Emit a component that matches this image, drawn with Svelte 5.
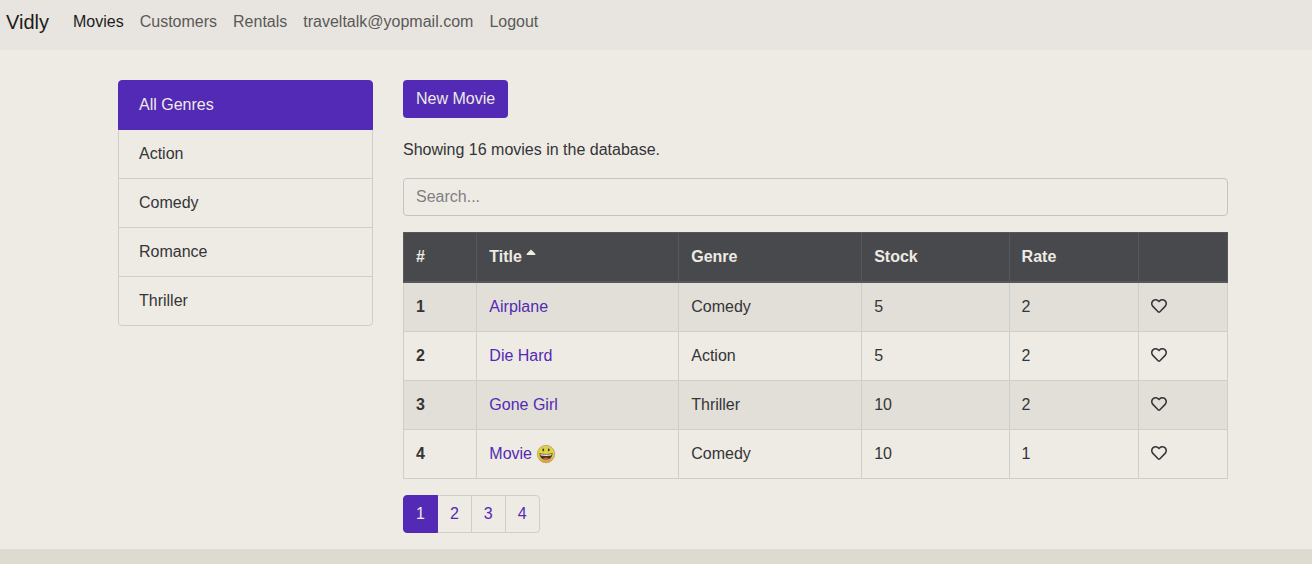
<script>
  const links = ['Customers', 'Rentals', 'traveltalk@yopmail.com', 'Logout'];
  const genres = ['All Genres', 'Action', 'Comedy', 'Romance', 'Thriller'];
  const movies = [
    { id: 1, title: 'Airplane', genre: 'Comedy', stock: 5, rate: 2 },
    { id: 2, title: 'Die Hard', genre: 'Action', stock: 5, rate: 2 },
    { id: 3, title: 'Gone Girl', genre: 'Thriller', stock: 10, rate: 2 },
    { id: 4, title: 'Movie', smile: true, genre: 'Comedy', stock: 10, rate: 1 }
  ];
  const pages = [1, 2, 3, 4];
  let genre = $state('All Genres');
  let page = $state(1);
  let query = $state('');
</script>

<div class="app">
  <nav class="navbar">
    <a class="brand" href="#home">Vidly</a>
    <a class="nav-link active" href="#movies">Movies</a>
    {#each links as link}
      <a class="nav-link" href="#{link}">{link}</a>
    {/each}
  </nav>

  <main>
    <ul class="genres">
      {#each genres as g}
        <li><button class:active={g === genre} onclick={() => (genre = g)}>{g}</button></li>
      {/each}
    </ul>

    <section>
      <a class="new" href="#new">New Movie</a>
      <p>Showing 16 movies in the database.</p>
      <input class="search" type="text" placeholder="Search..." aria-label="Search" bind:value={query} />

      <table>
        <colgroup>
          <col class="c-id" /><col class="c-title" /><col class="c-genre" />
          <col class="c-stock" /><col class="c-rate" /><col />
        </colgroup>
        <thead>
          <tr>
            <th>#</th>
            <th>
              Title
              <svg class="caret" viewBox="0 0 320 512" aria-hidden="true">
                <path d="M279 224H41c-21.400 0-32.100-25.900-17-41L143 64c9.400-9.400 24.600-9.400 33.900 0l119 119c15.200 15.100 4.500 41-16.900 41z" />
              </svg>
            </th>
            <th>Genre</th>
            <th>Stock</th>
            <th>Rate</th>
            <th></th>
          </tr>
        </thead>
        <tbody>
          {#each movies as m}
            <tr>
              <th>{m.id}</th>
              <td>
                <a href="#movie-{m.id}">{m.title}
                  {#if m.smile}
                    <svg class="smile" viewBox="0 0 20 20" aria-hidden="true">
                      <defs>
                        <linearGradient id="face" x1="0" y1="0" x2="0" y2="1">
                          <stop offset="0" stop-color="#d9ce55" />
                          <stop offset="0.55" stop-color="#e2d83f" />
                          <stop offset="1" stop-color="#d99b3c" />
                        </linearGradient>
                      </defs>
                      <circle cx="10" cy="10" r="8.700" fill="url(#face)" stroke="#b98f6a" stroke-width="0.700" />
                      <ellipse cx="7.300" cy="6" rx="0.900" ry="1.400" fill="#4b3c20" />
                      <ellipse cx="12.700" cy="6" rx="0.900" ry="1.400" fill="#4b3c20" />
                      <path d="M3.300 9.300Q10 10.600 16.700 9.300Q16 15.600 10 15.600Q4 15.600 3.300 9.300Z" fill="#4a3020" />
                      <path d="M4.200 9.900Q10 11 15.800 9.900L15.200 11.600Q10 12.400 4.800 11.600Z" fill="#f0eee6" />
                      <path d="M7 14.400Q10 12.700 13 14.400Q10 15.800 7 14.400Z" fill="#d05a45" />
                    </svg>
                  {/if}
                </a>
              </td>
              <td>{m.genre}</td>
              <td>{m.stock}</td>
              <td>{m.rate}</td>
              <td>
                <button class="like" aria-label="Like {m.title}">
                  <svg viewBox="0 0 512 512" aria-hidden="true">
                    <path d="M458.400 64.300C400.600 15.700 311.300 23 256 79.300 200.700 23 111.400 15.600 53.600 64.300-21.600 127.600-10.600 230.800 43 285.500l175.400 178.700c10 10.200 23.400 15.900 37.600 15.900 14.300 0 27.600-5.600 37.600-15.800L469 285.600c53.500-54.700 64.700-157.900-10.600-221.300zm-23.600 187.500L259.400 430.500c-2.400 2.400-4.400 2.400-6.800 0L77.200 251.800c-36.500-37.200-43.900-107.600 7.300-150.700 38.900-32.700 98.900-27.800 136.500 10.500l35 35.700 35-35.700c37.800-38.500 97.800-43.200 136.500-10.600 51.100 43.100 43.500 113.900 7.300 150.800z" />
                  </svg>
                </button>
              </td>
            </tr>
          {/each}
        </tbody>
      </table>

      <ul class="pages">
        {#each pages as p}
          <li><button class:active={p === page} onclick={() => (page = p)}>{p}</button></li>
        {/each}
      </ul>
    </section>
  </main>
</div>

<style>
  :global(body) {
    background: #dddacf;
  }
  .app,
  .app :global(*) {
    box-sizing: border-box;
  }
  .app {
    background: #eeebe4;
    color: #343537;
    font: 16px/24px "Liberation Sans", Arial, sans-serif;
  }
  a {
    color: #532ab5;
    text-decoration: none;
  }
  button {
    font: inherit;
    background: none;
    cursor: pointer;
  }
  ul {
    list-style: none;
    margin: 0;
    padding: 0;
  }
  .navbar {
    display: flex;
    align-items: center;
    padding: 2px 6px 8px;
    background: #e8e5e0;
  }
  .brand {
    margin-right: 16px;
    font-size: 20px;
    line-height: 30px;
    color: #1c1c1b;
  }
  .nav-link {
    padding: 8px;
    color: #5a5957;
  }
  .nav-link.active {
    color: #1c1c1b;
  }
  main {
    display: grid;
    grid-template-columns: 255fr 825fr;
    gap: 30px;
    align-items: start;
    padding: 30px 84px 16px 118px;
  }
  .genres li + li {
    margin-top: -1px;
  }
  .genres button {
    display: block;
    width: 100%;
    padding: 12px 20px;
    border: 1px solid #d0cecb;
    color: #343537;
    text-align: left;
  }
  .genres li:first-child button {
    border-radius: 4px 4px 0 0;
  }
  .genres li:last-child button {
    border-radius: 0 0 4px 4px;
  }
  .genres button.active {
    position: relative;
    background: #532ab5;
    border-color: #532ab5;
    color: #eeebe4;
  }
  .new {
    display: inline-block;
    padding: 7px 13px;
    border-radius: 4px;
    background: #532ab5;
    color: #eeebe4;
    vertical-align: top;
  }
  p {
    margin: 20px 0 16px;
  }
  .search {
    display: block;
    width: 100%;
    height: 38px;
    padding: 6px 12px;
    border: 1px solid #c3c4c6;
    border-radius: 4px;
    background: transparent;
    color: #343537;
    font: inherit;
  }
  .search::placeholder {
    color: #7f8082;
    opacity: 1;
  }
  table {
    width: 100%;
    margin: 16px 0;
    table-layout: fixed;
    border-collapse: collapse;
  }
  .c-id { width: 8.9%; }
  .c-title { width: 24.5%; }
  .c-genre { width: 22.2%; }
  .c-stock { width: 17.9%; }
  .c-rate { width: 15.7%; }
  th,
  td {
    padding: 12px;
    border: 1px solid #d0cecb;
    text-align: left;
    vertical-align: top;
  }
  thead th {
    background: #48494c;
    border-color: #57585b;
    border-bottom-width: 2px;
    color: #eeebe4;
  }
  tbody tr:nth-child(odd) {
    background: #e2dfd8;
  }
  .caret {
    width: 10px;
    height: 16px;
    vertical-align: -2px;
    fill: currentColor;
  }
  .smile {
    width: 20px;
    height: 20px;
    vertical-align: -5px;
  }
  .like {
    display: flex;
    align-items: center;
    height: 24px;
    padding: 0 0 2px;
    border: 0;
    color: #343537;
  }
  .like svg {
    width: 16px;
    height: 16px;
    fill: currentColor;
  }
  .pages {
    display: flex;
  }
  .pages li + li {
    margin-left: -1px;
  }
  .pages button {
    display: block;
    padding: 8px 12px;
    border: 1px solid #d0cecb;
    line-height: 20px;
    color: #532ab5;
  }
  .pages li:first-child button {
    border-radius: 4px 0 0 4px;
  }
  .pages li:last-child button {
    border-radius: 0 4px 4px 0;
  }
  .pages button.active {
    position: relative;
    background: #532ab5;
    border-color: #532ab5;
    color: #eeebe4;
  }
</style>
